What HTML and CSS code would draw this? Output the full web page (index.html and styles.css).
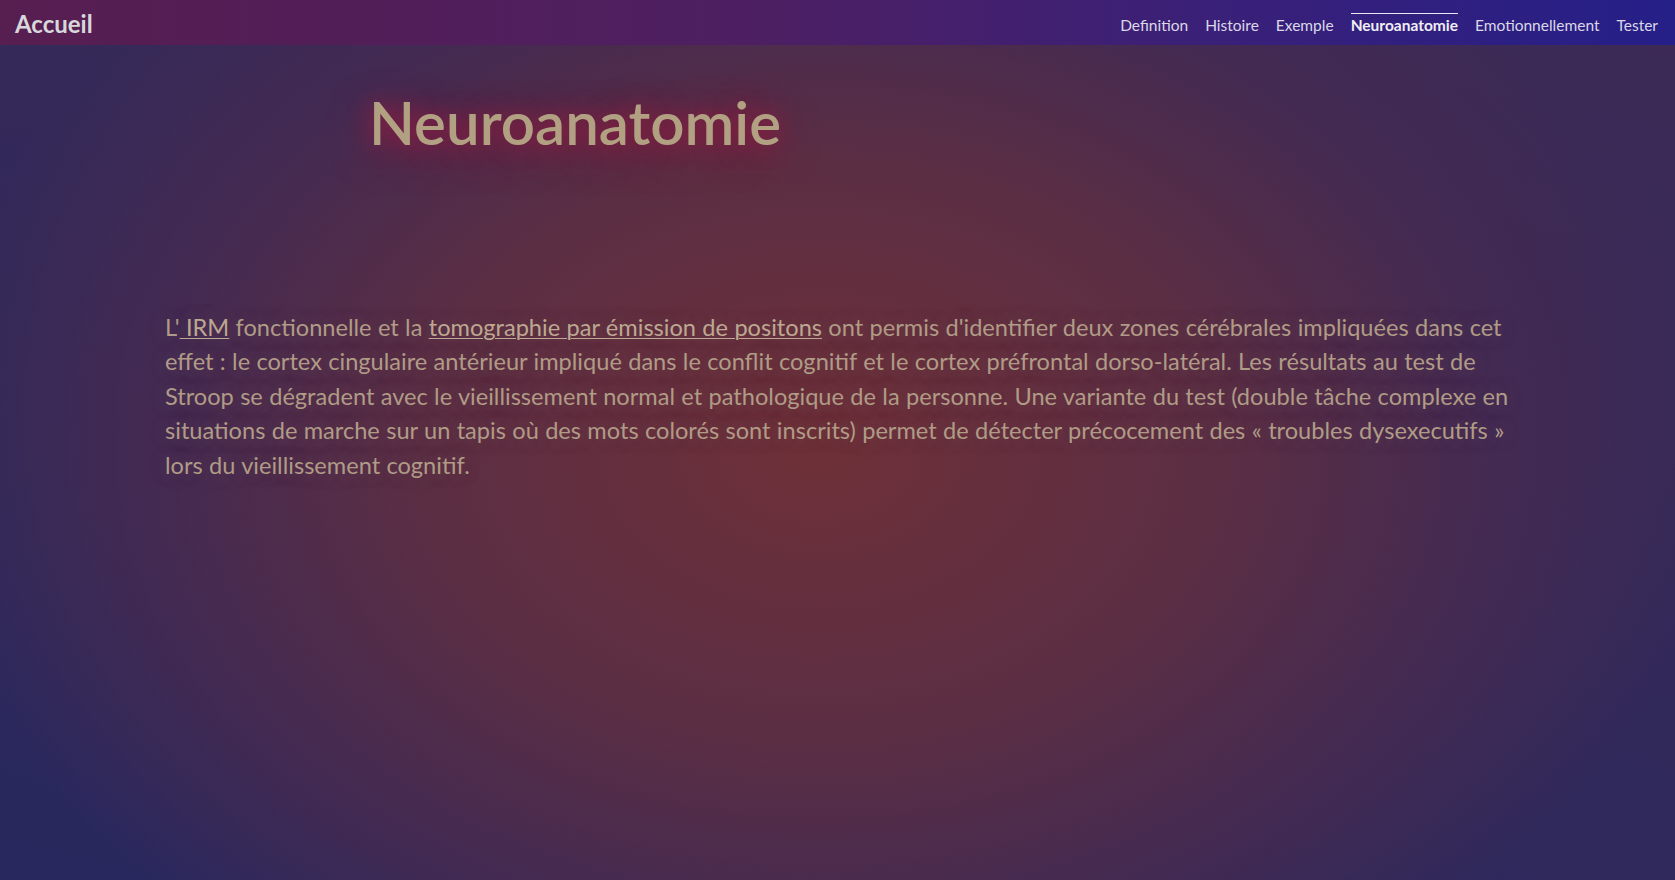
FILE: index.html
```html
<!DOCTYPE html>
<html lang="fr">
<head>
<meta charset="utf-8">
<title>Neuroanatomie</title>
<link rel="stylesheet" href="styles.css">
</head>
<body>
<header class="navbar">
  <a class="brand" href="#">Accueil</a>
  <nav class="menu">
    <a href="#">Definition</a>
    <a href="#">Histoire</a>
    <a href="#">Exemple</a>
    <a href="#" class="active">Neuroanatomie</a>
    <a href="#">Emotionnellement</a>
    <a href="#">Tester</a>
  </nav>
</header>
<main class="content">
  <h1 class="title">Neuroanatomie</h1>
  <p class="text">L'<a href="#"> IRM</a> fonctionnelle et la <a href="#">tomographie par émission de positons</a> ont permis d'identifier deux zones cérébrales impliquées dans cet effet : le cortex cingulaire antérieur impliqué dans le conflit cognitif et le cortex préfrontal dorso-latéral. Les résultats au test de Stroop se dégradent avec le vieillissement normal et pathologique de la personne. Une variante du test (double tâche complexe en situations de marche sur un tapis où des mots colorés sont inscrits) permet de détecter précocement des « troubles dysexecutifs » lors du vieillissement cognitif.</p>
</main>
</body>
</html>
```

FILE: styles.css
```css
html, body {
  margin: 0;
  padding: 0;
  height: 100%;
}
body {
  font-family: Lato, "Open Sans", sans-serif;
  background:
    radial-gradient(ellipse 900px 650px at 820px 450px, #6e3038 0%, #5b2e44 45%, #432a52 75%, rgba(60,40,85,0) 100%),
    linear-gradient(15deg, #28285e 0%, #30295b 40%, #3d2a55 100%);
  background-color: #3a2958;
  min-height: 880px;
  overflow: hidden;
}
.navbar {
  height: 45px;
  display: flex;
  align-items: center;
  justify-content: space-between;
  padding: 0 17px 0 15px;
  background: linear-gradient(90deg, #571e50 0%, #4d1f62 45%, #3a2078 72%, #251f88 100%);
}
.brand {
  color: #d8d8dc;
  font-weight: 700;
  font-size: 24px;
  text-decoration: none;
  margin-top: 2px;
}
.menu {
  display: flex;
  gap: 17px;
  align-self: stretch;
}
.menu a {
  color: #dcd8e8;
  font-size: 15.5px;
  text-decoration: none;
  display: flex;
  align-items: center;
  border-top: 1px solid transparent;
  margin-top: 13px;
  padding-top: 1px;
  padding-bottom: 10px;
}
.menu a.active {
  font-weight: 700;
  color: #f0eef5;
  border-top-color: #e8e8f0;
}
.content {
  padding: 0 158px 0 165px;
}
.title {
  margin: 37px 0 0 0;
  padding-left: 204px;
  font-size: 60px;
  font-weight: 600;
  color: #b2a083;
  text-shadow: 0 0 22px #931e42, 0 8px 40px #8a1d3d;
  line-height: 80px;
}
.text {
  margin: 148px 0 0 0;
  font-size: 23.6px;
  word-spacing: 0.3px;
  line-height: 34.4px;
  color: #b09b86;
  text-shadow: 0 0 18px rgba(120,100,110,0.35);
}
.text a {
  color: #bda891;
  text-decoration: underline;
  text-underline-offset: 2px;
  text-decoration-thickness: 1px;
}
```
